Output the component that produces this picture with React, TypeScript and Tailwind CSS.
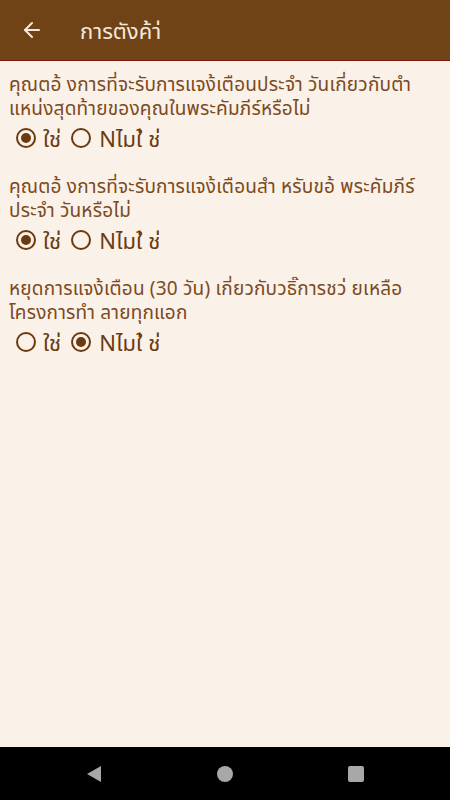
import { ArrowLeft } from 'lucide-react'

interface QuestionProps {
  lines: string[]
  selected: 'yes' | 'no'
}

function Radio({ checked }: { checked: boolean }) {
  return (
    <span className="flex h-5 w-5 shrink-0 items-center justify-center rounded-full border-2 border-[#6b3a10]">
      {checked && <span className="h-[10px] w-[10px] rounded-full bg-[#6b3a10]" />}
    </span>
  )
}

function Question({ lines, selected }: QuestionProps) {
  return (
    <div className="mb-6">
      <p className="text-[19px] leading-6 tracking-[0.2px] text-[#7b4a1e]">
        {lines.map((l) => (
          <span key={l} className="block whitespace-nowrap">{l}</span>
        ))}
      </p>
      <div className="mt-1.5 flex h-6 items-center pl-[7px] text-[22px] text-[#6b3a10]">
        <Radio checked={selected === 'yes'} />
        <span className="ml-[7px]">ใช่</span>
        <span className="ml-[10px]"><Radio checked={selected === 'no'} /></span>
        <span className="ml-[8px]">Nไมใ่ ช่</span>
      </div>
    </div>
  )
}

export default function App() {
  return (
    <div className="flex h-[800px] w-[450px] flex-col bg-[#faf1e8]" style={{ fontFamily: '"Noto Sans", "Noto Sans Thai", sans-serif' }}>
      <header className="flex h-[61px] shrink-0 items-center border-b border-[#7a1a0a] bg-[#6f4316] text-[#f5e9dc]">
        <ArrowLeft className="ml-[20px] h-6 w-6" strokeWidth={2} />
        <h1 className="ml-[36px] text-[22px]">การตังค้า่</h1>
      </header>
      <main className="flex-1 px-[9px] pt-[11px]">
        <Question
          lines={['คุณตอ้ งการที่จะรับการแจง้เตือนประจำ วันเกี่ยวกับตำ', 'แหน่งสุดท้ายของคุณในพระคัมภีร์หรือไม่']}
          selected="yes"
        />
        <Question
          lines={['คุณตอ้ งการที่จะรับการแจง้เตือนสำ หรับขอ้ พระคัมภีร์', 'ประจำ วันหรือไม่']}
          selected="yes"
        />
        <Question
          lines={['หยุดการแจง้เตือน (30 วัน) เกี่ยวกับวธิ๊การชว่ ยเหลือ', 'โครงการทำ ลายทุกแอก']}
          selected="no"
        />
      </main>
      <nav className="flex h-[53px] shrink-0 items-center bg-black">
        <div className="flex w-full items-center justify-between px-[86px]">
          <svg width="16" height="18" viewBox="0 0 16 18">
            <path d="M15 1 L1 9 L15 17 Z" fill="#a8a8a8" />
          </svg>
          <span className="h-4 w-4 rounded-full bg-[#a8a8a8]" />
          <span className="h-4 w-4 rounded-[2px] bg-[#a8a8a8]" />
        </div>
      </nav>
    </div>
  )
}
